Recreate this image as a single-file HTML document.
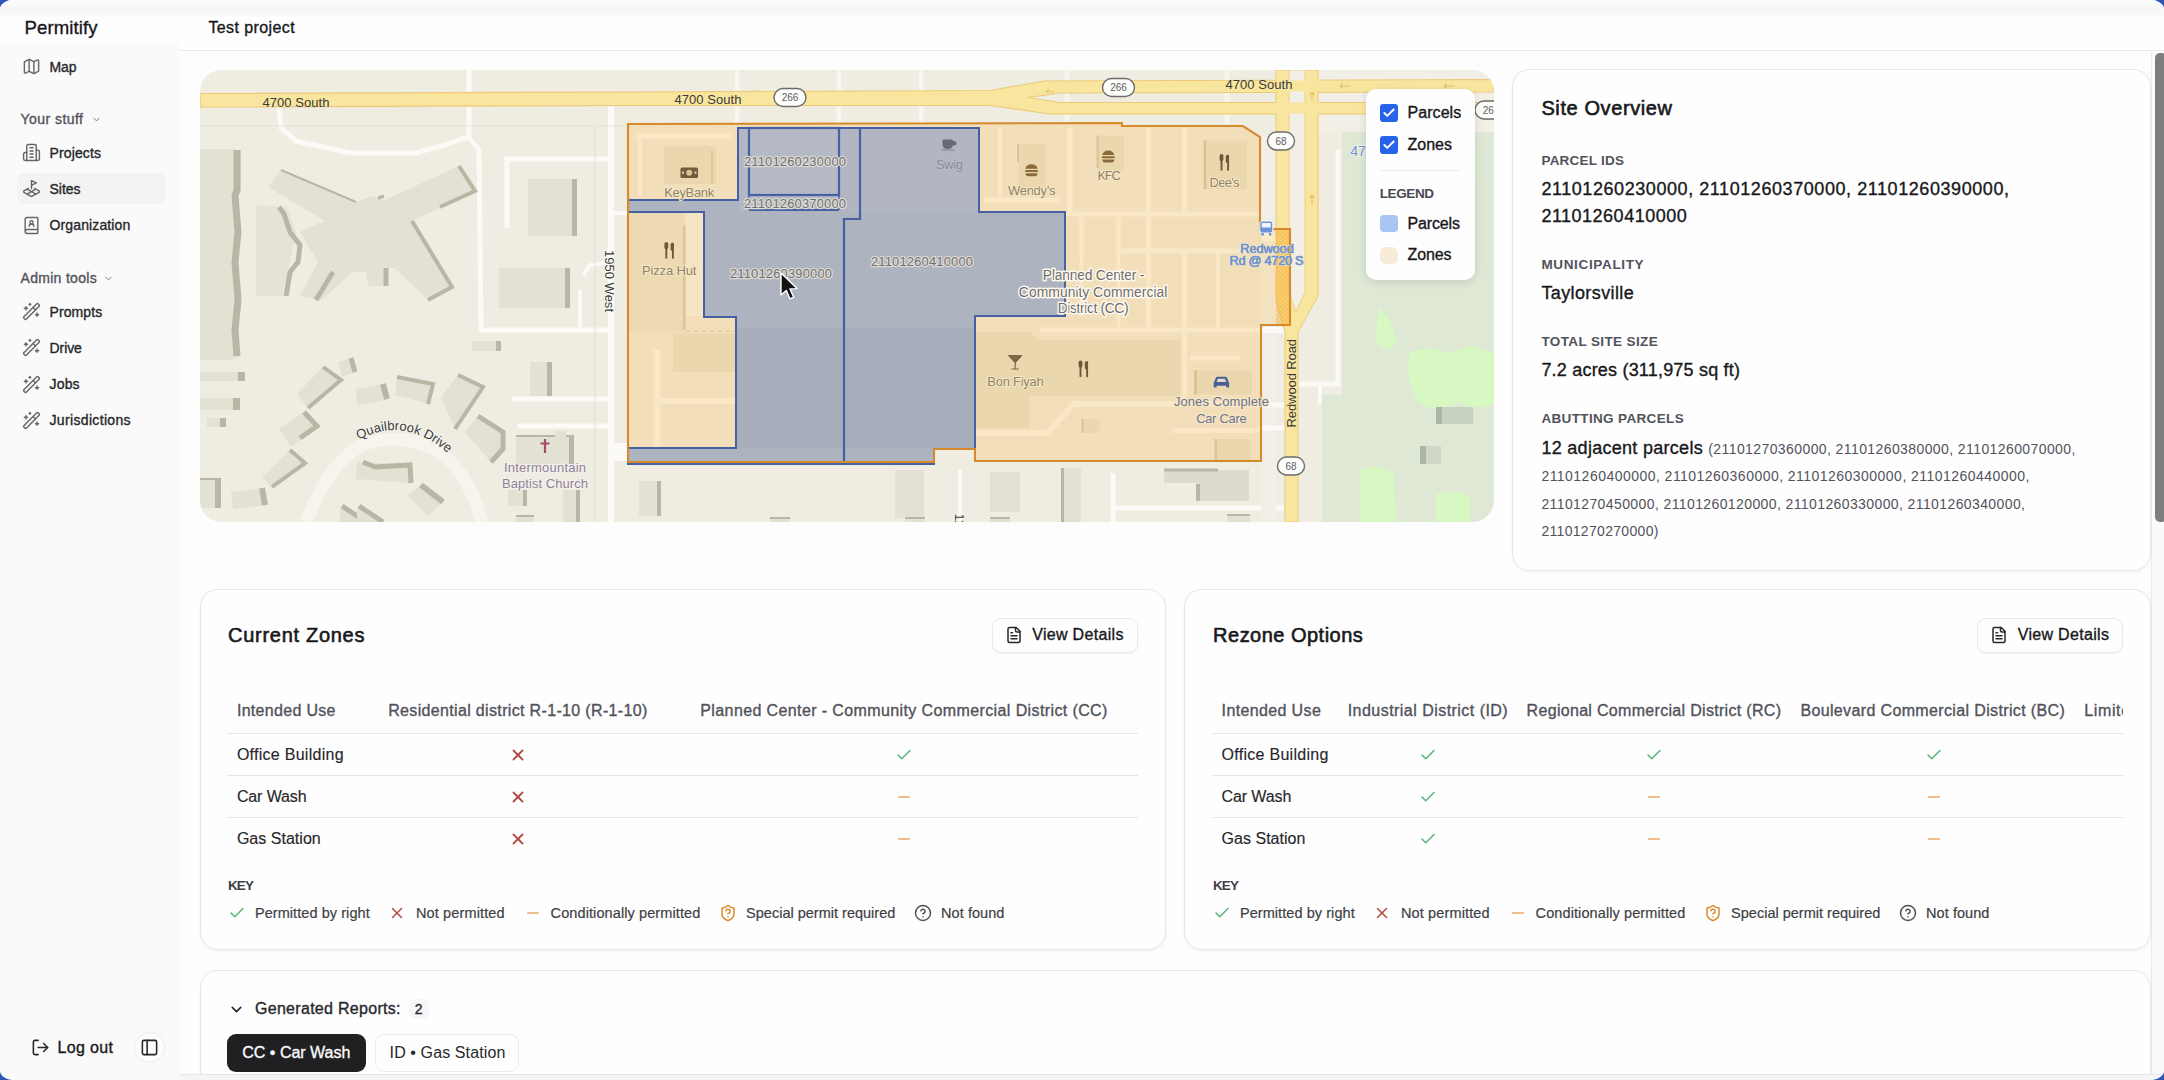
<!DOCTYPE html>
<html lang="en">
<head>
<meta charset="utf-8">
<title>Permitify - Test project</title>
<style>
*{box-sizing:border-box;margin:0;padding:0}
html,body{width:2164px;height:1080px;overflow:hidden;background:#2f55b5}
body{font-family:"Liberation Sans",sans-serif;color:#18181b;position:relative}
#win{position:absolute;left:0;top:0;width:2164px;height:1080px;background:#fdfdfd;border-radius:13px / 10px;overflow:hidden}
.abs{position:absolute}
.t{position:absolute;white-space:nowrap;line-height:1;transform:translateY(-50%)}
.m{-webkit-text-stroke:0.35px currentColor}
.sb{-webkit-text-stroke:0.6px currentColor}
#side{position:absolute;left:0;top:0;width:180px;height:1080px;background:#fafafa}
#sidehead{position:absolute;left:0;top:0;width:180px;height:44px;background:#fdfdfd}
#topstrip{position:absolute;left:0;top:0;width:2164px;height:17px;background:linear-gradient(#fbfbfb 0,#f9f9f9 5px,#f7f7f7 8px,#f8f8f8 14px,#fdfdfd 17px)}
#header{position:absolute;left:180px;top:0;width:1984px;height:51px;background:#fefefe;border-bottom:1.5px solid #e9e9e9}
.nav{font-size:14px;color:#27272a}
.grp{font-size:14px;color:#52525b}
.ico{position:absolute}
.card{position:absolute;background:#fefefe;border:1.5px solid #e7e7e9;border-radius:18px;box-shadow:0 1px 3px rgba(0,0,0,.05)}
.lbl{font-size:13.5px;letter-spacing:.7px;color:#52525b;font-weight:bold}
.val{font-size:18px;color:#18181b}
.sm{font-size:14px;color:#52525b}
.th{font-size:16px;color:#52525b}
.td{font-size:16px;color:#27272a}
.hr{position:absolute;height:1.5px;background:#e6e6e8}
.key{font-size:14.5px;color:#3f3f46}
</style>
</head>
<body>
<div id="win">
<!--SIDEBAR-->
<div id="side"><div id="sidehead"></div>
<div class="t m" style="left:24.5px;top:28px;letter-spacing:0.082px;font-size:18.600px;color:#18181b">Permitify</div>
<svg class="ico" style="left:21.5px;top:57.0px" width="19" height="19" viewBox="0 0 24 24" fill="none" stroke="#66666d" stroke-width="1.8" stroke-linecap="round" stroke-linejoin="round"><path d="M14.106 5.553a2 2 0 0 0 1.788 0l3.659-1.83A1 1 0 0 1 21 4.619v12.764a1 1 0 0 1-.553.894l-4.553 2.277a2 2 0 0 1-1.788 0l-4.212-2.106a2 2 0 0 0-1.788 0l-3.659 1.83A1 1 0 0 1 3 19.381V6.618a1 1 0 0 1 .553-.894l4.553-2.277a2 2 0 0 1 1.788 0z"/><path d="M15 5.764v15"/><path d="M9 3.236v15"/></svg>
<div class="t nav m" style="left:49.5px;top:66.5px;letter-spacing:-0.118px;">Map</div>
<div class="t grp m" style="left:20.5px;top:118.5px;letter-spacing:0.458px;">Your stuff</div>
<svg class="ico" style="left:90.5px;top:114.0px" width="11" height="11" viewBox="0 0 24 24" fill="none" stroke="#71717a" stroke-width="2" stroke-linecap="round" stroke-linejoin="round"><path d="m6 9 6 6 6-6"/></svg>
<div class="abs" style="left:17px;top:173px;width:149px;height:31px;border-radius:6px;background:#f3f3f4"></div>
<svg class="ico" style="left:21.5px;top:143.0px" width="19" height="19" viewBox="0 0 24 24" fill="none" stroke="#66666d" stroke-width="1.8" stroke-linecap="round" stroke-linejoin="round"><path d="M6 22V4a2 2 0 0 1 2-2h8a2 2 0 0 1 2 2v18Z"/><path d="M6 12H4a2 2 0 0 0-2 2v6a2 2 0 0 0 2 2h2"/><path d="M18 9h2a2 2 0 0 1 2 2v9a2 2 0 0 1-2 2h-2"/><path d="M10 6h4"/><path d="M10 10h4"/><path d="M10 14h4"/><path d="M10 18h4"/></svg>
<div class="t nav m" style="left:49.5px;top:152.5px;letter-spacing:0.132px;">Projects</div>
<svg class="ico" style="left:21.5px;top:179.0px" width="19" height="19" viewBox="0 0 24 24" fill="none" stroke="#66666d" stroke-width="1.8" stroke-linecap="round" stroke-linejoin="round"><path d="m12 8 6-3-6-3v10"/><path d="m8 11.990-5.500 3.140a1 1 0 0 0 0 1.740l8.500 4.860a2 2 0 0 0 2 0l8.500-4.860a1 1 0 0 0 0-1.740L16 12"/><path d="m6.490 12.850 11.020 6.300"/><path d="M17.510 12.850 6.500 19.150"/></svg>
<div class="t nav m" style="left:49.5px;top:188.5px;letter-spacing:-0.031px;">Sites</div>
<svg class="ico" style="left:21.5px;top:215.5px" width="19" height="19" viewBox="0 0 24 24" fill="none" stroke="#66666d" stroke-width="1.8" stroke-linecap="round" stroke-linejoin="round"><path d="M15 13a3 3 0 1 0-6 0"/><path d="M4 19.500v-15A2.500 2.500 0 0 1 6.500 2H19a1 1 0 0 1 1 1v18a1 1 0 0 1-1 1H6.500a1 1 0 0 1 0-5H20"/><circle cx="12" cy="8" r="2"/></svg>
<div class="t nav m" style="left:49.5px;top:225px;letter-spacing:0.129px;">Organization</div>
<div class="t grp m" style="left:20.5px;top:277.5px;letter-spacing:0.305px;">Admin tools</div>
<svg class="ico" style="left:103.0px;top:272.5px" width="11" height="11" viewBox="0 0 24 24" fill="none" stroke="#71717a" stroke-width="2" stroke-linecap="round" stroke-linejoin="round"><path d="m6 9 6 6 6-6"/></svg>
<svg class="ico" style="left:21.5px;top:302.0px" width="19" height="19" viewBox="0 0 24 24" fill="none" stroke="#66666d" stroke-width="1.8" stroke-linecap="round" stroke-linejoin="round"><path d="m21.640 3.640-1.280-1.280a1.210 1.210 0 0 0-1.720 0L2.360 18.640a1.210 1.210 0 0 0 0 1.720l1.280 1.280a1.200 1.200 0 0 0 1.720 0L21.640 5.360a1.200 1.200 0 0 0 0-1.720"/><path d="m14 7 3 3"/><path d="M5 6v4"/><path d="M19 14v4"/><path d="M10 2v2"/><path d="M7 8H3"/><path d="M21 16h-4"/><path d="M11 3H9"/></svg>
<div class="t nav m" style="left:49.5px;top:311.5px;letter-spacing:0.096px;">Prompts</div>
<svg class="ico" style="left:21.5px;top:338.3px" width="19" height="19" viewBox="0 0 24 24" fill="none" stroke="#66666d" stroke-width="1.8" stroke-linecap="round" stroke-linejoin="round"><path d="m21.640 3.640-1.280-1.280a1.210 1.210 0 0 0-1.720 0L2.360 18.640a1.210 1.210 0 0 0 0 1.720l1.280 1.280a1.200 1.200 0 0 0 1.720 0L21.640 5.360a1.200 1.200 0 0 0 0-1.720"/><path d="m14 7 3 3"/><path d="M5 6v4"/><path d="M19 14v4"/><path d="M10 2v2"/><path d="M7 8H3"/><path d="M21 16h-4"/><path d="M11 3H9"/></svg>
<div class="t nav m" style="left:49.5px;top:347.8px;letter-spacing:-0.068px;">Drive</div>
<svg class="ico" style="left:21.5px;top:374.8px" width="19" height="19" viewBox="0 0 24 24" fill="none" stroke="#66666d" stroke-width="1.8" stroke-linecap="round" stroke-linejoin="round"><path d="m21.640 3.640-1.280-1.280a1.210 1.210 0 0 0-1.720 0L2.360 18.640a1.210 1.210 0 0 0 0 1.720l1.280 1.280a1.200 1.200 0 0 0 1.720 0L21.640 5.360a1.200 1.200 0 0 0 0-1.720"/><path d="m14 7 3 3"/><path d="M5 6v4"/><path d="M19 14v4"/><path d="M10 2v2"/><path d="M7 8H3"/><path d="M21 16h-4"/><path d="M11 3H9"/></svg>
<div class="t nav m" style="left:49.5px;top:384.3px;letter-spacing:0.176px;">Jobs</div>
<svg class="ico" style="left:21.5px;top:410.9px" width="19" height="19" viewBox="0 0 24 24" fill="none" stroke="#66666d" stroke-width="1.8" stroke-linecap="round" stroke-linejoin="round"><path d="m21.640 3.640-1.280-1.280a1.210 1.210 0 0 0-1.720 0L2.360 18.640a1.210 1.210 0 0 0 0 1.720l1.280 1.280a1.200 1.200 0 0 0 1.720 0L21.640 5.360a1.200 1.200 0 0 0 0-1.720"/><path d="m14 7 3 3"/><path d="M5 6v4"/><path d="M19 14v4"/><path d="M10 2v2"/><path d="M7 8H3"/><path d="M21 16h-4"/><path d="M11 3H9"/></svg>
<div class="t nav m" style="left:49.5px;top:420.4px;letter-spacing:0.339px;">Jurisdictions</div>
<svg class="ico" style="left:30.5px;top:1037.8px" width="19" height="19" viewBox="0 0 24 24" fill="none" stroke="#27272a" stroke-width="2" stroke-linecap="round" stroke-linejoin="round"><path d="M9 21H5a2 2 0 0 1-2-2V5a2 2 0 0 1 2-2h4"/><polyline points="16 17 21 12 16 7"/><line x1="21" x2="9" y1="12" y2="12"/></svg>
<div class="t m" style="left:57.5px;top:1047.5px;letter-spacing:0.353px;font-size:16px;color:#18181b">Log out</div>
<div class="abs" style="left:133.500px;top:1031.500px;width:31px;height:31px;border-radius:15.500px;border:1.500px solid #ececee;background:#fdfdfd"></div>
<svg class="ico" style="left:139.7px;top:1037.7px" width="19" height="19" viewBox="0 0 24 24" fill="none" stroke="#27272a" stroke-width="2" stroke-linecap="round" stroke-linejoin="round"><rect width="18" height="18" x="3" y="3" rx="2"/><path d="M9 3v18"/></svg>
</div>
<!--HEADER-->
<div id="header"></div><div id="topstrip"></div><div class="t m" style="left:208.4px;top:28.2px;letter-spacing:0.399px;font-size:16px;color:#18181b">Test project</div>
<!--MAP-->
<div class="abs" style="left:200px;top:70px;width:1294px;height:452px;border-radius:22px;overflow:hidden;background:#efece1">
<svg class="abs" style="left:0;top:0" width="1294" height="452" viewBox="200 70 1294 452" font-family="Liberation Sans, sans-serif">
<rect x="200" y="70" width="1294" height="452" fill="#efece1" />
<polygon points="1342,132 1494,132 1494,522 1322,522 1322,395 1342,395" fill="#dfe8d5" />
<rect x="1298" y="70" width="196" height="62" fill="#f1efe6" />
<g fill="#d7f7c3">
<path d="M1378,308 q10,6 18,28 q4,10 -8,12 q-14,0 -12,-14z"/>
<path d="M1410,352 q20,-8 40,2 q20,-14 40,-2 l4,0 l0,52 q-20,8 -36,-2 q-20,14 -40,0 q-14,-24 -8,-50z"/>
<path d="M1360,470 q18,-8 34,4 l2,48 l-36,0z"/>
<path d="M1436,494 q18,-6 34,2 l0,26 l-34,0z"/>
<path d="M1420,150 q30,-6 60,0 l0,30 q-30,6 -60,0z" opacity=".35"/>
</g>
<rect x="1436" y="407" width="37" height="17" fill="#c8d2c0" /><rect x="1436" y="407" width="6" height="17" fill="#a9b5a5" />
<rect x="1420" y="446" width="21" height="18" fill="#cfd8c7" /><rect x="1420" y="446" width="6" height="18" fill="#a9b5a5" />
<polyline points="469,70 469,138 479,150 481,330 611,330" fill="none" stroke="#fbfaf6" stroke-width="5" stroke-linejoin="round"/>
<polyline points="279,106 281,128 296,141 350,153 415,153 445,145 470,136" fill="none" stroke="#fbfaf6" stroke-width="5" stroke-linejoin="round"/>
<polyline points="507,228 507,159 611,159" fill="none" stroke="#fbfaf6" stroke-width="5" />
<polyline points="611,106 611,522" fill="none" stroke="#fbfaf6" stroke-width="6" />
<polyline points="580,290 580,330" fill="none" stroke="#fbfaf6" stroke-width="4" />
<polyline points="583,275 590,265 611,262" fill="none" stroke="#fbfaf6" stroke-width="4" />
<polyline points="512,399 611,399" fill="none" stroke="#fbfaf6" stroke-width="5" />
<polyline points="517,426 611,426" fill="none" stroke="#fbfaf6" stroke-width="5" />
<polyline points="611,213 628,213" fill="none" stroke="#fbfaf6" stroke-width="4" />
<polyline points="611,452 628,452" fill="none" stroke="#fbfaf6" stroke-width="18" />
<path d="M306,522 Q330,462 360,446 Q400,430 440,452 Q470,476 482,522" fill="none" stroke="#f6f4ec" stroke-width="13"/>
<polyline points="1113,473 1113,522" fill="none" stroke="#fbfaf6" stroke-width="5" />
<polyline points="1113,508 1284,508" fill="none" stroke="#fbfaf6" stroke-width="5" />
<polyline points="960,470 960,522" fill="none" stroke="#fbfaf6" stroke-width="4" />
<rect x="1261" y="136" width="15" height="386" fill="#f1efe8" />
<polyline points="1262,237 1276,237" fill="none" stroke="#fbfaf6" stroke-width="8" />
<polyline points="1262,330 1284,330" fill="none" stroke="#fbfaf6" stroke-width="6" />
<polyline points="1262,405 1284,405" fill="none" stroke="#fbfaf6" stroke-width="5" />
<polyline points="1262,428 1284,428" fill="none" stroke="#fbfaf6" stroke-width="5" />
<polyline points="1298,384 1338,384 1338,150" fill="none" stroke="#fbfaf6" stroke-width="5" />
<polyline points="1320,384 1320,404" fill="none" stroke="#fbfaf6" stroke-width="4" />
<polyline points="737,70 737,124" fill="none" stroke="#f7f5ee" stroke-width="5" />
<polyline points="839,70 839,124" fill="none" stroke="#f7f5ee" stroke-width="5" />
<polyline points="921,70 921,124" fill="none" stroke="#f7f5ee" stroke-width="5" />
<polyline points="1067,70 1067,124" fill="none" stroke="#f7f5ee" stroke-width="5" />
<polyline points="1227,70 1227,124" fill="none" stroke="#f7f5ee" stroke-width="5" />
<polyline points="595,126 595,522" fill="none" stroke="#e2dfd3" stroke-width="1" />
<polyline points="200,126 628,126" fill="none" stroke="#e6e3d8" stroke-width="1" />
<polygon points="200,149 233,149 241,152 241,190 237,196 241,232 237,262 241,300 237,330 240,356 230,360 200,360" fill="#e3e1d3" />
<polyline points="237,150 237,190 235,196 238,232 235,262 238,300 235,330 237,356" fill="none" stroke="#b9b6a6" stroke-width="7" />
<polygon points="256,205 287,207 296,232 290,262 282,296 256,296" fill="#e5e3d6" />
<polyline points="279,207 284,214 290,232 300,245 298,262 290,272 286,296" fill="none" stroke="#b9b6a6" stroke-width="5" />
<polygon points="281,170 356,202 372,196 385,200 459,166 475,191 412,221 452,287 428,300 395,268 388,268 388,286 368,286 366,272 352,272 322,300 300,296 318,262 300,232 325,221 268,187" fill="#e3e1d3" />
<polyline points="281,170 356,202" fill="none" stroke="#b9b6a6" stroke-width="2" />
<polyline points="459,166 475,191 440,207" fill="none" stroke="#b9b6a6" stroke-width="4" stroke-linejoin="miter"/>
<polyline points="412,221 452,287 428,300" fill="none" stroke="#b9b6a6" stroke-width="4" />
<polyline points="386,268 386,286" fill="none" stroke="#b9b6a6" stroke-width="5" />
<polyline points="333,272 316,300" fill="none" stroke="#b9b6a6" stroke-width="5" />
<polyline points="378,198 384,196" fill="none" stroke="#b9b6a6" stroke-width="3" />
<rect x="528" y="179" width="49" height="57" fill="#e3e1d3" /><rect x="572" y="179" width="5" height="57" fill="#b9b6a6" />
<rect x="499" y="268" width="71" height="40" fill="#e3e1d3" /><rect x="565" y="268" width="5" height="40" fill="#b9b6a6" />
<rect x="200" y="372" width="45" height="9" fill="#e3e1d3" /><rect x="238" y="372" width="7" height="9" fill="#b9b6a6" />
<rect x="200" y="398" width="40" height="12" fill="#e3e1d3" /><rect x="233" y="398" width="7" height="12" fill="#b9b6a6" />
<rect x="207" y="418" width="19" height="9" fill="#e3e1d3" /><rect x="220" y="418" width="6" height="9" fill="#b9b6a6" />
<rect x="200" y="478" width="21" height="30" fill="#e3e1d3" /><rect x="215" y="478" width="6" height="30" fill="#b9b6a6" /><rect x="200" y="478" width="21" height="2" fill="#b9b6a6" />
<polygon points="231,492 264,488 267,505 233,509" fill="#e3e1d3" /><polyline points="262,488 265,505" fill="none" stroke="#b9b6a6" stroke-width="6" />
<polygon points="297,394 323,367 341,380 308,408" fill="#e3e1d3" /><polyline points="323,367 341,380 308,408" fill="none" stroke="#b9b6a6" stroke-width="4" />
<polygon points="338,362 352,358 356,372 342,377" fill="#e3e1d3" /><polyline points="351,358 355,372" fill="none" stroke="#b9b6a6" stroke-width="5" />
<polygon points="279,429 304,412 317,426 291,447" fill="#e3e1d3" /><polyline points="304,412 317,426 300,438" fill="none" stroke="#b9b6a6" stroke-width="5" />
<polygon points="262,477 290,450 305,463 272,487" fill="#e3e1d3" /><polyline points="290,450 305,463 272,487" fill="none" stroke="#b9b6a6" stroke-width="4" />
<polygon points="356,389 384,384 389,399 357,405" fill="#e3e1d3" /><polyline points="383,384 387,399" fill="none" stroke="#b9b6a6" stroke-width="6" />
<polygon points="397,377 433,384 429,404 395,395" fill="#e3e1d3" /><polyline points="397,377 433,384 428,404" fill="none" stroke="#b9b6a6" stroke-width="4" />
<polygon points="458,375 483,387 455,429 441,397" fill="#e3e1d3" /><polyline points="458,375 483,387 455,429" fill="none" stroke="#b9b6a6" stroke-width="4" />
<polygon points="478,416 503,432 503,449 491,462 465,432" fill="#e3e1d3" /><polyline points="478,416 503,432 503,449 491,462" fill="none" stroke="#b9b6a6" stroke-width="5" />
<polygon points="357,462 410,464 412,483 356,479" fill="#e3e1d3" /><polyline points="363,462 375,467 410,465 411,483" fill="none" stroke="#b9b6a6" stroke-width="5" />
<polygon points="407,495 421,485 443,502 428,516" fill="#e3e1d3" /><polyline points="421,485 443,502" fill="none" stroke="#b9b6a6" stroke-width="6" />
<polygon points="340,506 365,522 340,522" fill="#e3e1d3" /><polyline points="342,506 366,522" fill="none" stroke="#b9b6a6" stroke-width="5" />
<polygon points="357,506 380,522 357,522" fill="#e3e1d3" /><polyline points="359,506 383,522" fill="none" stroke="#b9b6a6" stroke-width="5" />
<rect x="472" y="341" width="29" height="10" fill="#e3e1d3" /><rect x="496" y="341" width="5" height="10" fill="#b9b6a6" />
<rect x="530" y="362" width="22" height="34" fill="#e3e1d3" /><rect x="547" y="362" width="5" height="34" fill="#b9b6a6" />
<rect x="516" y="435" width="58" height="29" fill="#e3e1d3" /><rect x="516" y="435" width="58" height="2" fill="#b9b6a6" /><rect x="555" y="431" width="11" height="6" fill="#e3e1d3" /><rect x="569" y="437" width="5" height="27" fill="#b9b6a6" />
<rect x="563" y="490" width="17" height="32" fill="#e3e1d3" /><rect x="576" y="490" width="4" height="32" fill="#b9b6a6" />
<rect x="508" y="490" width="19" height="16" fill="#e3e1d3" /><rect x="523" y="490" width="4" height="16" fill="#b9b6a6" />
<rect x="516" y="515" width="18" height="7" fill="#e3e1d3" /><rect x="516" y="515" width="18" height="2" fill="#b9b6a6" />
<rect x="639" y="481" width="22" height="35" fill="#e3e1d3" /><rect x="657" y="481" width="4" height="35" fill="#b9b6a6" />
<rect x="895" y="470" width="29" height="48" fill="#e3e1d3" />
<rect x="990" y="472" width="30" height="40" fill="#e3e1d3" />
<rect x="1061" y="468" width="20" height="54" fill="#e3e1d3" /><rect x="1061" y="468" width="3" height="54" fill="#b9b6a6" />
<polygon points="1164,470 1249,470 1249,501 1198,501 1198,483 1164,483" fill="#dddbd0" />
<polyline points="1164,470 1218,470" fill="none" stroke="#b9b6a6" stroke-width="3" /><polyline points="1198,484 1198,501" fill="none" stroke="#b9b6a6" stroke-width="4" />
<rect x="1227" y="514" width="23" height="8" fill="#e3e1d3" /><rect x="1227" y="514" width="23" height="2" fill="#b9b6a6" />
<rect x="770" y="517" width="20" height="5" fill="#e3e1d3" /><rect x="770" y="517" width="20" height="2" fill="#b9b6a6" />
<rect x="905" y="517" width="20" height="5" fill="#e3e1d3" /><rect x="905" y="517" width="20" height="2" fill="#b9b6a6" />
<rect x="990" y="517" width="20" height="5" fill="#e3e1d3" /><rect x="990" y="517" width="20" height="2" fill="#b9b6a6" />
<polygon points="200,93.5 640,92 990,90.5 1045,81 1494,79.5 1494,92 1060,93 1028,97.5 1060,102.5 1494,102.5 1494,114 1050,114 990,105.5 640,105.5 200,107" fill="#f9e69e" stroke="#edc979" stroke-width="1.2"/>
<polygon points="1276,70 1318,70 1318,296 1298,332 1298,522 1285,522 1285,332 1276,300" fill="#f9e69e" stroke="#edc979" stroke-width="1"/>
<polygon points="1289,70 1305,70 1305,292 1296,312 1289,292" fill="#f1efe6" stroke="#edc979" stroke-width=".8"/>
<rect x="1288" y="80.5" width="18" height="11.0" fill="#f9e69e" /><rect x="1288" y="102.5" width="18" height="11.0" fill="#f9e69e" />
<rect x="1275" y="80.5" width="2" height="11.0" fill="#f9e69e" /><rect x="1275" y="102.5" width="2" height="11.0" fill="#f9e69e" /><rect x="1317" y="80.5" width="2" height="11.0" fill="#f9e69e" /><rect x="1317" y="102.5" width="2" height="11.0" fill="#f9e69e" />
<polygon points="628,124 1122,123 1122,126 1243,126 1260,137 1260,229 1290,229 1290,325 1261,325 1261,461 975,461 975,449 934,449 934,462 628,462" fill="rgba(255,168,10,0.185)" />
<polygon points="976,332 1030,332 1040,340 1180,340 1180,396 1030,396 1030,428 976,428" fill="rgba(200,172,110,0.16)" />
<rect x="1194" y="370" width="58" height="24.5" fill="rgba(200,172,110,0.16)" /><rect x="1194" y="370" width="3" height="24.5" fill="rgba(170,140,80,0.25)" />
<rect x="1081.5" y="419" width="18.0" height="14" fill="rgba(200,172,110,0.16)" /><rect x="1081.5" y="419" width="2.0" height="14" fill="rgba(170,140,80,0.25)" />
<rect x="1214.5" y="439" width="35.5" height="22" fill="rgba(200,172,110,0.16)" /><rect x="1214.5" y="439" width="2.5" height="22" fill="rgba(170,140,80,0.25)" />
<rect x="1018" y="144" width="28" height="44" fill="rgba(200,172,110,0.16)" /><rect x="1017" y="144" width="2" height="18" fill="rgba(170,140,80,0.3)" />
<rect x="1097.5" y="135.5" width="26.5" height="34.5" fill="rgba(200,172,110,0.16)" /><rect x="1096.5" y="135.5" width="2.0" height="32.5" fill="rgba(170,140,80,0.3)" />
<rect x="1204.5" y="140.5" width="42.5" height="48.5" fill="rgba(200,172,110,0.16)" /><rect x="1203.5" y="140.5" width="2.5" height="48.5" fill="rgba(170,140,80,0.3)" />
<rect x="664" y="146" width="52" height="38" fill="rgba(200,172,110,0.16)" /><rect x="711" y="150" width="2" height="34" fill="rgba(170,140,80,0.2)" />
<rect x="629" y="213" width="55" height="119" fill="rgba(200,172,110,0.09)" /><rect x="683" y="226" width="2.5" height="104" fill="rgba(170,140,80,0.30)" /><rect x="686" y="213" width="17" height="103" fill="rgba(255,244,215,0.30)" />
<polyline points="685,331 735,331" fill="none" stroke="rgba(170,140,80,0.35)" stroke-width="1.2" stroke-dasharray="5 3"/>
<rect x="673" y="333" width="62" height="39" fill="rgba(200,172,110,0.16)" />
<polyline points="1066,214 1260,214" fill="none" stroke="#f9e7c5" stroke-width="5" />
<polyline points="1070,128 1070,214" fill="none" stroke="#f9e7c5" stroke-width="5" />
<polyline points="1148.5,128 1148.5,332" fill="none" stroke="#f9e7c5" stroke-width="5" />
<polyline points="1184.5,128 1184.5,214" fill="none" stroke="#f9e7c5" stroke-width="5" />
<polyline points="1120,251 1260,251" fill="none" stroke="#f9e7c5" stroke-width="5" />
<polyline points="1081.5,214 1081.5,316" fill="none" stroke="#f9e7c5" stroke-width="4" />
<polyline points="1118.5,214 1118.5,330" fill="none" stroke="#f9e7c5" stroke-width="4" />
<polyline points="1040,330 1260,330" fill="none" stroke="#f9e7c5" stroke-width="5" />
<polyline points="1218,251 1218,330" fill="none" stroke="#f9e7c5" stroke-width="4" />
<polyline points="1184.5,251 1184.5,404" fill="none" stroke="#f9e7c5" stroke-width="5" />
<polyline points="1000,128 1000,200" fill="none" stroke="#f9e7c5" stroke-width="4" />
<polyline points="984,200 1060,200" fill="none" stroke="#f9e7c5" stroke-width="5" />
<polyline points="1190,358 1240,358" fill="none" stroke="#f9e7c5" stroke-width="5" />
<polyline points="1260,404 1074,404 1047,433 976,433" fill="none" stroke="#f9e7c5" stroke-width="6" stroke-linejoin="round"/>
<polyline points="1171.5,430.5 1260,430.5" fill="none" stroke="#f9e7c5" stroke-width="5" />
<polyline points="636,136 730,136" fill="none" stroke="#f9e7c5" stroke-width="5" />
<polyline points="640,136 640,196" fill="none" stroke="#f9e7c5" stroke-width="4" />
<polyline points="657,350 657,447" fill="none" stroke="#f9e7c5" stroke-width="7" />
<polyline points="657,401 735,401" fill="none" stroke="#f9e7c5" stroke-width="6" />
<defs><pattern id="hat" width="3" height="3" patternUnits="userSpaceOnUse" patternTransform="rotate(45)"><rect width="1.500" height="3" fill="rgba(240,150,30,0.35)"/></pattern></defs>
<rect x="1276" y="229" width="14" height="96" fill="rgba(245,165,40,0.12)" /><rect x="1276" y="229" width="14" height="96" fill="url(#hat)" />
<polygon points="738,128 979,128 979,212 1065,212 1065,316 975,316 975,449 934,449 934,464 628,464 628,448 736,448 736,317 704,317 704,212 628,212 628,200 738,200" fill="#abb2c0" opacity="0.97"/>
<rect x="749" y="128" width="90" height="67" fill="rgba(255,255,255,0.05)" />
<rect x="737" y="328" width="238" height="120" fill="rgba(40,40,60,0.035)" />
<rect x="738" y="129" width="241" height="82" fill="rgba(255,255,240,0.05)" />
<polygon points="738,128 979,128 979,212 1065,212 1065,316 975,316 975,449 934,449 934,464 628,464 628,448 736,448 736,317 704,317 704,212 628,212 628,200 738,200" fill="none" stroke="#4560a3" stroke-width="2" stroke-linejoin="miter"/>
<polyline points="844,464 844,219 860,219 860,128" fill="none" stroke="#4560a3" stroke-width="2.2" />
<rect x="749" y="128" width="90" height="67" fill="none" stroke="#4560a3" stroke-width="2.2"/>
<polyline points="749,210 839,210" fill="none" stroke="#4560a3" stroke-width="2.2" />
<polyline points="839,195 839,210" fill="none" stroke="#4560a3" stroke-width="1.2" />
<polyline points="749,195 749,210" fill="none" stroke="#4560a3" stroke-width="1.2" />
<polygon points="628,124 1122,123 1122,126 1243,126 1260,137 1260,229 1290,229 1290,325 1261,325 1261,461 975,461 975,449 934,449 934,462 628,462" fill="none" stroke="#d78a2c" stroke-width="2.1" stroke-linejoin="miter"/>
<text x="296" y="106.5" font-size="13" fill="#3a3a3a" text-anchor="middle" stroke="#f9e69e" stroke-width="0" stroke-linejoin="round" paint-order="stroke" textLength="67" lengthAdjust="spacing" >4700 South</text>
<text x="708" y="104" font-size="13" fill="#3a3a3a" text-anchor="middle" stroke="#f9e69e" stroke-width="0" stroke-linejoin="round" paint-order="stroke" textLength="67" lengthAdjust="spacing" >4700 South</text>
<text x="1259" y="88.5" font-size="13" fill="#3a3a3a" text-anchor="middle" stroke="#f9e69e" stroke-width="0" stroke-linejoin="round" paint-order="stroke" textLength="67" lengthAdjust="spacing" >4700 South</text>
<rect x="774.0" y="88.5" width="32" height="18" rx="9.0" fill="#fdfdfb" stroke="#6b6b6b" stroke-width="1.4"/><text x="790" y="101.3" font-size="10" fill="#5e5e5e" text-anchor="middle">266</text>
<rect x="1102.5" y="78.5" width="32" height="18" rx="9.0" fill="#fdfdfb" stroke="#6b6b6b" stroke-width="1.4"/><text x="1118.5" y="91.3" font-size="10" fill="#5e5e5e" text-anchor="middle">266</text>
<rect x="1475.0" y="101.0" width="32" height="18" rx="9.0" fill="#fdfdfb" stroke="#6b6b6b" stroke-width="1.4"/><text x="1491" y="113.8" font-size="10" fill="#5e5e5e" text-anchor="middle">266</text>
<rect x="1267.5" y="132.0" width="27" height="18" rx="9.0" fill="#fdfdfb" stroke="#6b6b6b" stroke-width="1.4"/><text x="1281" y="144.8" font-size="10" fill="#5e5e5e" text-anchor="middle">68</text>
<rect x="1277.5" y="457.0" width="27" height="18" rx="9.0" fill="#fdfdfb" stroke="#6b6b6b" stroke-width="1.4"/><text x="1291" y="469.8" font-size="10" fill="#5e5e5e" text-anchor="middle">68</text>
<text x="795" y="166" font-size="13" fill="#707070" text-anchor="middle" stroke="#dcdad4" stroke-width="2.5" stroke-linejoin="round" paint-order="stroke" textLength="102" lengthAdjust="spacing" >21101260230000</text>
<text x="795" y="207.5" font-size="13" fill="#707070" text-anchor="middle" stroke="#dcdad4" stroke-width="2.5" stroke-linejoin="round" paint-order="stroke" textLength="102" lengthAdjust="spacing" >21101260370000</text>
<text x="781" y="277.5" font-size="13" fill="#707070" text-anchor="middle" stroke="#dcdad4" stroke-width="2.5" stroke-linejoin="round" paint-order="stroke" textLength="102" lengthAdjust="spacing" >21101260390000</text>
<text x="922" y="265.5" font-size="13" fill="#707070" text-anchor="middle" stroke="#dcdad4" stroke-width="2.5" stroke-linejoin="round" paint-order="stroke" textLength="102" lengthAdjust="spacing" >21101260410000</text>
<text x="689.2" y="197" font-size="13" fill="#8e8468" text-anchor="middle" stroke="#f6e6c6" stroke-width="2" stroke-linejoin="round" paint-order="stroke" textLength="50" lengthAdjust="spacing" >KeyBank</text>
<rect x="680.500" y="167.500" width="17.500" height="10.500" rx="1.500" fill="#6e5d3c"/><circle cx="689.200" cy="172.800" r="3" fill="#d9c396"/><rect x="682" y="171.500" width="2" height="2.500" fill="#d9c396"/><rect x="694.500" y="171.500" width="2" height="2.500" fill="#d9c396"/>
<text x="669.2" y="274.8" font-size="13" fill="#8e8468" text-anchor="middle" stroke="#f6e6c6" stroke-width="2" stroke-linejoin="round" paint-order="stroke" textLength="54.5" lengthAdjust="spacing" >Pizza Hut</text>
<g stroke="#6b5a3a" fill="none" stroke-linecap="round"><path d="M666.3000000000001,243.8v3.500" stroke-width="3.800"/><path d="M666.3000000000001,246.8v11" stroke-width="1.900"/><path d="M672.9,257.8v-14" stroke-width="1.900"/><path d="M672.2,244.3v5" stroke-width="3.200"/></g>
<text x="949.4" y="169" font-size="13" fill="#8a8e98" text-anchor="middle" stroke="#b6bbc6" stroke-width="2" stroke-linejoin="round" paint-order="stroke" textLength="27" lengthAdjust="spacing" >Swig</text>
<path d="M943,140h9.500v4.500a4,4 0 0 1 -4,4h-1.500a4,4 0 0 1 -4,-4zM952.500,141.500h1.800a1.600,1.600 0 0 1 0,3.500h-1.800" fill="#666b75" stroke="#666b75" stroke-width="1"/><path d="M941.500,150h13" stroke="#7d828c" stroke-width="1"/>
<text x="1031.7" y="194.6" font-size="13" fill="#8e8468" text-anchor="middle" stroke="#f6e6c6" stroke-width="2" stroke-linejoin="round" paint-order="stroke" textLength="47.5" lengthAdjust="spacing" >Wendy&#39;s</text>
<g fill="#8a6a3a"><path d="M1025.5,168.8a6,4.5 0 0 1 12,0z"/><rect x="1025.0" y="170.0" width="13" height="2" rx="1"/><path d="M1025.5,173.3h12a3,3 0 0 1 -3,3h-6a3,3 0 0 1 -3,-3z"/></g>
<text x="1109.2" y="180.4" font-size="13" fill="#8e8468" text-anchor="middle" stroke="#f6e6c6" stroke-width="2" stroke-linejoin="round" paint-order="stroke" textLength="23.5" lengthAdjust="spacing" >KFC</text>
<g fill="#8a6a3a"><path d="M1102.3,155.1a6,4.5 0 0 1 12,0z"/><rect x="1101.8" y="156.29999999999998" width="13" height="2" rx="1"/><path d="M1102.3,159.6h12a3,3 0 0 1 -3,3h-6a3,3 0 0 1 -3,-3z"/></g>
<text x="1224.6" y="186.8" font-size="13" fill="#8e8468" text-anchor="middle" stroke="#f6e6c6" stroke-width="2" stroke-linejoin="round" paint-order="stroke" textLength="30" lengthAdjust="spacing" >Dee&#39;s</text>
<g stroke="#6b5a3a" fill="none" stroke-linecap="round"><path d="M1221.5,155.8v3.500" stroke-width="3.800"/><path d="M1221.5,158.8v11" stroke-width="1.900"/><path d="M1228.1,169.8v-14" stroke-width="1.900"/><path d="M1227.3999999999999,156.3v5" stroke-width="3.200"/></g>
<text x="1093.6" y="280" font-size="14" fill="#6e6e6e" text-anchor="middle" stroke="#fdf8ee" stroke-width="3" stroke-linejoin="round" paint-order="stroke" textLength="101.5" lengthAdjust="spacing" >Planned Center -</text>
<text x="1093.1" y="296.6" font-size="14" fill="#6e6e6e" text-anchor="middle" stroke="#fdf8ee" stroke-width="3" stroke-linejoin="round" paint-order="stroke" textLength="148.5" lengthAdjust="spacing" >Community Commercial</text>
<text x="1093.2" y="312.5" font-size="14" fill="#6e6e6e" text-anchor="middle" stroke="#fdf8ee" stroke-width="3" stroke-linejoin="round" paint-order="stroke" textLength="71" lengthAdjust="spacing" >District (CC)</text>
<text x="1267" y="253" font-size="12.8" fill="#6f93cc" text-anchor="middle" stroke="#f3e7cf" stroke-width="1.5" stroke-linejoin="round" paint-order="stroke" textLength="53.5" lengthAdjust="spacing" >Redwood</text><text x="1267" y="253" font-size="12.8" fill="#6f93cc" text-anchor="middle" stroke="#6f93cc" stroke-width="0.5" textLength="53.5" lengthAdjust="spacing" >Redwood</text>
<text x="1266.6" y="265.2" font-size="12.8" fill="#6f93cc" text-anchor="middle" stroke="#f3e7cf" stroke-width="1.5" stroke-linejoin="round" paint-order="stroke" textLength="74" lengthAdjust="spacing" >Rd @ 4720 S</text><text x="1266.6" y="265.2" font-size="12.8" fill="#6f93cc" text-anchor="middle" stroke="#6f93cc" stroke-width="0.5" textLength="74" lengthAdjust="spacing" >Rd @ 4720 S</text>
<g><rect x="1259.800" y="221" width="13" height="12" rx="2.500" fill="#6b93d6" stroke="#f5f5f5" stroke-width="1"/><rect x="1261.800" y="223" width="9" height="4.500" fill="#f0f4fb"/><rect x="1261.300" y="233" width="2.500" height="2.500" fill="#6b93d6"/><rect x="1268.800" y="233" width="2.500" height="2.500" fill="#6b93d6"/></g>
<text x="1015.5" y="386" font-size="13" fill="#8e8468" text-anchor="middle" stroke="#f6e6c6" stroke-width="2" stroke-linejoin="round" paint-order="stroke" textLength="56.5" lengthAdjust="spacing" >Bon Fiyah</text>
<path d="M1008.700,355.500h13l-6.500,7zM1015.200,362v6.500M1011.500,369h7.400" fill="#7a6846" stroke="#7a6846" stroke-width="1.200" stroke-linejoin="round"/>
<g stroke="#6b5a3a" fill="none" stroke-linecap="round"><path d="M1080.5,362.3v3.500" stroke-width="3.800"/><path d="M1080.5,365.3v11" stroke-width="1.900"/><path d="M1087.1,376.3v-14" stroke-width="1.900"/><path d="M1086.3999999999999,362.8v5" stroke-width="3.200"/></g>
<text x="1221.4" y="406.2" font-size="13" fill="#6e7288" text-anchor="middle" stroke="#f5e6c8" stroke-width="2" stroke-linejoin="round" paint-order="stroke" textLength="95" lengthAdjust="spacing" >Jones Complete</text>
<text x="1221.4" y="422.5" font-size="13" fill="#6e7288" text-anchor="middle" stroke="#f5e6c8" stroke-width="2" stroke-linejoin="round" paint-order="stroke" textLength="50.5" lengthAdjust="spacing" >Car Care</text>
<path d="M1213.700,387.500v-4.500l2,-5q.5,-1.200 1.700,-1.200h8q1.200,0 1.700,1.200l2,5v4.500h-2.800v-1.800h-9.800v1.800z" fill="#4a5f96"/><path d="M1216.600,382l1.200,-3.300h7.200l1.200,3.300z" fill="#e3d9c4"/>
<text x="0" y="0" font-size="13" fill="#3a3a3a" text-anchor="middle" stroke="#f9e69e" stroke-width="0" stroke-linejoin="round" paint-order="stroke" textLength="88.5" lengthAdjust="spacing" transform="translate(1295.800,383.200) rotate(-90)">Redwood Road</text>
<text x="0" y="0" font-size="13" fill="#3a3a3a" text-anchor="middle" stroke="#fbfaf6" stroke-width="2" stroke-linejoin="round" paint-order="stroke" textLength="62" lengthAdjust="spacing" transform="translate(604.500,281) rotate(90)">1950 West</text>
<path id="qb" d="M357,441 Q403,414 449,454" fill="none"/>
<text font-size="13" fill="#3a3a3a" stroke="#f4f2ea" stroke-width="2" paint-order="stroke"><textPath href="#qb" startOffset="2">Quailbrook Drive</textPath></text>
<text x="545" y="471.5" font-size="13" fill="#8f7f9a" text-anchor="middle" stroke="#f3f0ea" stroke-width="2.5" stroke-linejoin="round" paint-order="stroke" textLength="82" lengthAdjust="spacing" >Intermountain</text>
<text x="545" y="487.5" font-size="13" fill="#8f7f9a" text-anchor="middle" stroke="#f3f0ea" stroke-width="2.5" stroke-linejoin="round" paint-order="stroke" textLength="86" lengthAdjust="spacing" >Baptist Church</text>
<path d="M545,439v14M540.500,443.500h9" stroke="#a0506a" stroke-width="2.200" fill="none"/>
<text x="1358" y="156" font-size="14" fill="#6b93d6" text-anchor="middle" stroke="#f1efe6" stroke-width="2" stroke-linejoin="round" paint-order="stroke" >47</text>
<text x="0" y="0" font-size="12" fill="#3a3a3a" text-anchor="middle" stroke="#f4f2ea" stroke-width="2" stroke-linejoin="round" paint-order="stroke" transform="translate(955,520) rotate(90)">11</text>
<g stroke="#e3c46e" stroke-width="1.200" fill="none"><path d="M1340,86h10M1340,86l3,-2.500M1340,86l3,2.500"/><path d="M1444,86h10M1444,86l3,-2.500M1444,86l3,2.500"/><path d="M1312,205v-10M1312,195l-2.500,3M1312,195l2.500,3"/><path d="M1312,100v-8M1312,92l-2.500,3M1312,92l2.500,3"/><path d="M1046,92h8M1046,92l3,-2.500"/></g>
<path d="M781,273 l0,22 l5.200,-4.600 l3.700,8.400 l3.800,-1.700 l-3.700,-8.200 l7.100,-.3z" fill="#111" stroke="#fff" stroke-width="1.400" stroke-linejoin="round"/>
</svg></div>
<div class="abs" style="left:1366px;top:88.500px;width:108.500px;height:191px;border-radius:10px;background:#fefefe;box-shadow:0 2px 8px rgba(0,0,0,.12)"></div>
<div class="abs" style="left:1379.500px;top:104px;width:18px;height:18px;border-radius:3px;background:#2563eb"></div>
<svg class="ico" style="left:1381.500px;top:106px" width="14" height="14" viewBox="0 0 24 24" fill="none" stroke="#fff" stroke-width="3.400" stroke-linecap="round" stroke-linejoin="round"><path d="M20 6 9 17l-5-5"/></svg>
<div class="abs" style="left:1379.500px;top:136px;width:18px;height:18px;border-radius:3px;background:#2563eb"></div>
<svg class="ico" style="left:1381.500px;top:138px" width="14" height="14" viewBox="0 0 24 24" fill="none" stroke="#fff" stroke-width="3.400" stroke-linecap="round" stroke-linejoin="round"><path d="M20 6 9 17l-5-5"/></svg>
<div class="t m" style="left:1407.6px;top:113.3px;letter-spacing:0.041px;font-size:16px;color:#18181b">Parcels</div>
<div class="t m" style="left:1407.6px;top:145.3px;letter-spacing:-0.017px;font-size:16px;color:#18181b">Zones</div>
<div class="abs" style="left:1380px;top:169.500px;width:80px;height:1.500px;background:#ececee"></div>
<div class="t lbl" style="left:1379.7px;top:193.6px;letter-spacing:-0.391px;color:#4a4a52">LEGEND</div>
<div class="abs" style="left:1379.500px;top:215px;width:18px;height:17px;border-radius:4px;background:#a9c5f2"></div>
<div class="abs" style="left:1379.500px;top:246.500px;width:18px;height:17px;border-radius:6px;background:#f9ebd9"></div>
<div class="t m" style="left:1407.6px;top:223.5px;letter-spacing:-0.159px;font-size:16px;color:#18181b">Parcels</div>
<div class="t m" style="left:1407.6px;top:255.3px;letter-spacing:-0.117px;font-size:16px;color:#18181b">Zones</div>
<!--OVERVIEW-->
<div class="card" style="left:1512px;top:68.500px;width:639px;height:502.500px"></div>
<div class="t sb" style="left:1541.4px;top:107.5px;letter-spacing:0.602px;font-size:20px;color:#18181b">Site Overview</div>
<div class="t lbl" style="left:1541.4px;top:160.5px;letter-spacing:0.232px;">PARCEL IDS</div>
<div class="t val m" style="left:1541.4px;top:189px;letter-spacing:0.568px;">21101260230000, 21101260370000, 21101260390000,</div>
<div class="t val m" style="left:1541.4px;top:215.5px;letter-spacing:0.499px;">21101260410000</div>
<div class="t lbl" style="left:1541.4px;top:265px;letter-spacing:0.655px;">MUNICIPALITY</div>
<div class="t val m" style="left:1541.4px;top:292.5px;letter-spacing:0.389px;">Taylorsville</div>
<div class="t lbl" style="left:1541.4px;top:342.3px;letter-spacing:0.377px;">TOTAL SITE SIZE</div>
<div class="t val m" style="left:1541.4px;top:370.3px;letter-spacing:0.201px;">7.2 acres (311,975 sq ft)</div>
<div class="t lbl" style="left:1541.4px;top:419.3px;letter-spacing:0.353px;">ABUTTING PARCELS</div>
<div class="t val m" style="left:1541.4px;top:447.5px;letter-spacing:0.289px;">12 adjacent parcels</div>
<div class="t sm" style="left:1708.3px;top:449px;letter-spacing:0.406px;">(21101270360000, 21101260380000, 21101260070000,</div>
<div class="t sm" style="left:1541.4px;top:476.3px;letter-spacing:0.468px;">21101260400000, 21101260360000, 21101260300000, 21101260440000,</div>
<div class="t sm" style="left:1541.4px;top:503.5px;letter-spacing:0.395px;">21101270450000, 21101260120000, 21101260330000, 21101260340000,</div>
<div class="t sm" style="left:1541.4px;top:530.5px;letter-spacing:0.312px;">21101270270000)</div>
<!--ZONES-->
<div class="card" style="left:199.500px;top:589px;width:966px;height:361px"></div>
<div class="t sb" style="left:228.1px;top:635.2px;letter-spacing:0.705px;font-size:20px;color:#18181b">Current Zones</div>
<div class="abs" style="left:991.5px;top:617.500px;width:146px;height:35.500px;border-radius:9px;border:1.500px solid #e9e9eb;background:#fefefe;box-shadow:0 1px 2px rgba(0,0,0,.06)"></div>
<svg class="ico" style="left:1004.8px;top:626.4px" width="18" height="18" viewBox="0 0 24 24" fill="none" stroke="#27272a" stroke-width="2" stroke-linecap="round" stroke-linejoin="round"><path d="M15 2H6a2 2 0 0 0-2 2v16a2 2 0 0 0 2 2h12a2 2 0 0 0 2-2V7Z"/><path d="M14 2v4a2 2 0 0 0 2 2h4"/><path d="M10 9H8"/><path d="M16 13H8"/><path d="M16 17H8"/></svg>
<div class="t m" style="left:1032.2px;top:635.4px;letter-spacing:0.314px;font-size:16px;color:#18181b">View Details</div>
<div class="t th m" style="left:236.9px;top:710.5px;letter-spacing:0.311px;">Intended Use</div>
<div class="t th m" style="left:388.2px;top:710.5px;letter-spacing:0.340px;">Residential district R-1-10 (R-1-10)</div>
<div class="t th m" style="left:700.3px;top:710.5px;letter-spacing:0.389px;">Planned Center - Community Commercial District (CC)</div>
<div class="hr" style="left:227px;top:732.5px;width:911px"></div>
<div class="hr" style="left:227px;top:774.5px;width:911px"></div>
<div class="hr" style="left:227px;top:816.8px;width:911px"></div>
<div class="t td" style="left:236.9px;top:754.8px;letter-spacing:0.273px;-webkit-text-stroke:.15px currentColor">Office Building</div>
<svg class="ico" style="left:508.6px;top:745.8px" width="18" height="18" viewBox="0 0 24 24" fill="none" stroke="#b34a40" stroke-width="2.4" stroke-linecap="round" stroke-linejoin="round"><path d="M18 6 6 18"/><path d="m6 6 12 12"/></svg>
<svg class="ico" style="left:895.0px;top:745.8px" width="18" height="18" viewBox="0 0 24 24" fill="none" stroke="#58b47a" stroke-width="2" stroke-linecap="round" stroke-linejoin="round"><path d="M20 6 9 17l-5-5"/></svg>
<div class="t td" style="left:236.9px;top:796.6px;letter-spacing:-0.119px;-webkit-text-stroke:.15px currentColor">Car Wash</div>
<svg class="ico" style="left:508.6px;top:787.6px" width="18" height="18" viewBox="0 0 24 24" fill="none" stroke="#b34a40" stroke-width="2.4" stroke-linecap="round" stroke-linejoin="round"><path d="M18 6 6 18"/><path d="m6 6 12 12"/></svg>
<svg class="ico" style="left:895.0px;top:787.6px" width="18" height="18" viewBox="0 0 24 24" fill="none" stroke="#e6a765" stroke-width="2.2" stroke-linecap="round" stroke-linejoin="round"><path d="M5 12h14"/></svg>
<div class="t td" style="left:236.9px;top:838.8px;letter-spacing:0.020px;-webkit-text-stroke:.15px currentColor">Gas Station</div>
<svg class="ico" style="left:508.6px;top:829.8px" width="18" height="18" viewBox="0 0 24 24" fill="none" stroke="#b34a40" stroke-width="2.4" stroke-linecap="round" stroke-linejoin="round"><path d="M18 6 6 18"/><path d="m6 6 12 12"/></svg>
<svg class="ico" style="left:895.0px;top:829.8px" width="18" height="18" viewBox="0 0 24 24" fill="none" stroke="#e6a765" stroke-width="2.2" stroke-linecap="round" stroke-linejoin="round"><path d="M5 12h14"/></svg>
<div class="t lbl" style="left:228px;top:885.5px;letter-spacing:-0.880px;color:#3f3f46">KEY</div>
<svg class="ico" style="left:228.0px;top:904.2px" width="18" height="18" viewBox="0 0 24 24" fill="none" stroke="#58b47a" stroke-width="2" stroke-linecap="round" stroke-linejoin="round"><path d="M20 6 9 17l-5-5"/></svg>
<div class="t key" style="left:254.9px;top:913.2px;letter-spacing:0.069px;-webkit-text-stroke:.2px currentColor">Permitted by right</div>
<svg class="ico" style="left:388.4px;top:904.2px" width="18" height="18" viewBox="0 0 24 24" fill="none" stroke="#b34a40" stroke-width="2" stroke-linecap="round" stroke-linejoin="round"><path d="M18 6 6 18"/><path d="m6 6 12 12"/></svg>
<div class="t key" style="left:415.9px;top:913.2px;letter-spacing:0.139px;-webkit-text-stroke:.2px currentColor">Not permitted</div>
<svg class="ico" style="left:523.7px;top:904.2px" width="18" height="18" viewBox="0 0 24 24" fill="none" stroke="#e6a765" stroke-width="2" stroke-linecap="round" stroke-linejoin="round"><path d="M5 12h14"/></svg>
<div class="t key" style="left:550.6px;top:913.2px;letter-spacing:0.100px;-webkit-text-stroke:.2px currentColor">Conditionally permitted</div>
<svg class="ico" style="left:719.2px;top:904.2px" width="18" height="18" viewBox="0 0 24 24" fill="none" stroke="#d9892b" stroke-width="2" stroke-linecap="round" stroke-linejoin="round"><path d="M20 13c0 5-3.500 7.500-7.660 8.950a1 1 0 0 1-.670-.010C7.500 20.500 4 18 4 13V6a1 1 0 0 1 1-1c2 0 4.500-1.200 6.240-2.720a1.170 1.170 0 0 1 1.520 0C14.510 3.810 17 5 19 5a1 1 0 0 1 1 1z"/><path d="M9.100 9a3 3 0 0 1 5.820 1c0 2-3 3-3 3"/><path d="M12 17h.01"/></svg>
<div class="t key" style="left:746.1px;top:913.2px;letter-spacing:0.004px;-webkit-text-stroke:.2px currentColor">Special permit required</div>
<svg class="ico" style="left:914.0px;top:904.2px" width="18" height="18" viewBox="0 0 24 24" fill="none" stroke="#52525b" stroke-width="2" stroke-linecap="round" stroke-linejoin="round"><circle cx="12" cy="12" r="10"/><path d="M9.090 9a3 3 0 0 1 5.830 1c0 2-3 3-3 3"/><path d="M12 17h.01"/></svg>
<div class="t key" style="left:941.1px;top:913.2px;letter-spacing:0.053px;-webkit-text-stroke:.2px currentColor">Not found</div>
<!--REZONE-->
<div class="card" style="left:1184px;top:589px;width:966.500px;height:361px"></div>
<div class="t sb" style="left:1213.1px;top:635.2px;letter-spacing:0.483px;font-size:20px;color:#18181b">Rezone Options</div>
<div class="abs" style="left:1977px;top:617.500px;width:146px;height:35.500px;border-radius:9px;border:1.500px solid #e9e9eb;background:#fefefe;box-shadow:0 1px 2px rgba(0,0,0,.06)"></div>
<svg class="ico" style="left:1990.3px;top:626.4px" width="18" height="18" viewBox="0 0 24 24" fill="none" stroke="#27272a" stroke-width="2" stroke-linecap="round" stroke-linejoin="round"><path d="M15 2H6a2 2 0 0 0-2 2v16a2 2 0 0 0 2 2h12a2 2 0 0 0 2-2V7Z"/><path d="M14 2v4a2 2 0 0 0 2 2h4"/><path d="M10 9H8"/><path d="M16 13H8"/><path d="M16 17H8"/></svg>
<div class="t m" style="left:2017.7px;top:635.4px;letter-spacing:0.314px;font-size:16px;color:#18181b">View Details</div>
<div class="abs" style="left:1212px;top:690px;width:910.500px;height:170px;overflow:hidden">
<div class="t th m" style="left:9.599999999999909px;top:20.5px;letter-spacing:0.365px;">Intended Use</div>
<div class="t th m" style="left:135.70000000000005px;top:20.5px;letter-spacing:0.463px;">Industrial District (ID)</div>
<div class="t th m" style="left:314.5999999999999px;top:20.5px;letter-spacing:0.310px;">Regional Commercial District (RC)</div>
<div class="t th m" style="left:588.4000000000001px;top:20.5px;letter-spacing:0.361px;">Boulevard Commercial District (BC)</div>
<div class="t th m" style="left:872.1999999999998px;top:20.5px;letter-spacing:0.637px;">Limited Commercial District (LC)</div>
</div>
<div class="hr" style="left:1211.500px;top:732.5px;width:912px"></div>
<div class="hr" style="left:1211.500px;top:774.5px;width:912px"></div>
<div class="hr" style="left:1211.500px;top:816.8px;width:912px"></div>
<div class="t td" style="left:1221.6000000000001px;top:754.8px;letter-spacing:0.273px;-webkit-text-stroke:.15px currentColor">Office Building</div>
<svg class="ico" style="left:1419.4px;top:745.8px" width="18" height="18" viewBox="0 0 24 24" fill="none" stroke="#58b47a" stroke-width="2" stroke-linecap="round" stroke-linejoin="round"><path d="M20 6 9 17l-5-5"/></svg>
<svg class="ico" style="left:1645.0px;top:745.8px" width="18" height="18" viewBox="0 0 24 24" fill="none" stroke="#58b47a" stroke-width="2" stroke-linecap="round" stroke-linejoin="round"><path d="M20 6 9 17l-5-5"/></svg>
<svg class="ico" style="left:1924.6px;top:745.8px" width="18" height="18" viewBox="0 0 24 24" fill="none" stroke="#58b47a" stroke-width="2" stroke-linecap="round" stroke-linejoin="round"><path d="M20 6 9 17l-5-5"/></svg>
<div class="t td" style="left:1221.6000000000001px;top:796.6px;letter-spacing:-0.119px;-webkit-text-stroke:.15px currentColor">Car Wash</div>
<svg class="ico" style="left:1419.4px;top:787.6px" width="18" height="18" viewBox="0 0 24 24" fill="none" stroke="#58b47a" stroke-width="2" stroke-linecap="round" stroke-linejoin="round"><path d="M20 6 9 17l-5-5"/></svg>
<svg class="ico" style="left:1645.0px;top:787.6px" width="18" height="18" viewBox="0 0 24 24" fill="none" stroke="#e6a765" stroke-width="2.2" stroke-linecap="round" stroke-linejoin="round"><path d="M5 12h14"/></svg>
<svg class="ico" style="left:1924.6px;top:787.6px" width="18" height="18" viewBox="0 0 24 24" fill="none" stroke="#e6a765" stroke-width="2.2" stroke-linecap="round" stroke-linejoin="round"><path d="M5 12h14"/></svg>
<div class="t td" style="left:1221.6000000000001px;top:838.8px;letter-spacing:0.020px;-webkit-text-stroke:.15px currentColor">Gas Station</div>
<svg class="ico" style="left:1419.4px;top:829.8px" width="18" height="18" viewBox="0 0 24 24" fill="none" stroke="#58b47a" stroke-width="2" stroke-linecap="round" stroke-linejoin="round"><path d="M20 6 9 17l-5-5"/></svg>
<svg class="ico" style="left:1645.0px;top:829.8px" width="18" height="18" viewBox="0 0 24 24" fill="none" stroke="#e6a765" stroke-width="2.2" stroke-linecap="round" stroke-linejoin="round"><path d="M5 12h14"/></svg>
<svg class="ico" style="left:1924.6px;top:829.8px" width="18" height="18" viewBox="0 0 24 24" fill="none" stroke="#e6a765" stroke-width="2.2" stroke-linecap="round" stroke-linejoin="round"><path d="M5 12h14"/></svg>
<div class="t lbl" style="left:1213px;top:885.5px;letter-spacing:-0.880px;color:#3f3f46">KEY</div>
<svg class="ico" style="left:1213.0px;top:904.2px" width="18" height="18" viewBox="0 0 24 24" fill="none" stroke="#58b47a" stroke-width="2" stroke-linecap="round" stroke-linejoin="round"><path d="M20 6 9 17l-5-5"/></svg>
<div class="t key" style="left:1239.9px;top:913.2px;letter-spacing:0.069px;-webkit-text-stroke:.2px currentColor">Permitted by right</div>
<svg class="ico" style="left:1373.4px;top:904.2px" width="18" height="18" viewBox="0 0 24 24" fill="none" stroke="#b34a40" stroke-width="2" stroke-linecap="round" stroke-linejoin="round"><path d="M18 6 6 18"/><path d="m6 6 12 12"/></svg>
<div class="t key" style="left:1400.9px;top:913.2px;letter-spacing:0.139px;-webkit-text-stroke:.2px currentColor">Not permitted</div>
<svg class="ico" style="left:1508.7px;top:904.2px" width="18" height="18" viewBox="0 0 24 24" fill="none" stroke="#e6a765" stroke-width="2" stroke-linecap="round" stroke-linejoin="round"><path d="M5 12h14"/></svg>
<div class="t key" style="left:1535.6px;top:913.2px;letter-spacing:0.100px;-webkit-text-stroke:.2px currentColor">Conditionally permitted</div>
<svg class="ico" style="left:1704.2px;top:904.2px" width="18" height="18" viewBox="0 0 24 24" fill="none" stroke="#d9892b" stroke-width="2" stroke-linecap="round" stroke-linejoin="round"><path d="M20 13c0 5-3.500 7.500-7.660 8.950a1 1 0 0 1-.670-.010C7.500 20.500 4 18 4 13V6a1 1 0 0 1 1-1c2 0 4.500-1.200 6.240-2.720a1.170 1.170 0 0 1 1.520 0C14.510 3.810 17 5 19 5a1 1 0 0 1 1 1z"/><path d="M9.100 9a3 3 0 0 1 5.820 1c0 2-3 3-3 3"/><path d="M12 17h.01"/></svg>
<div class="t key" style="left:1731.1px;top:913.2px;letter-spacing:0.004px;-webkit-text-stroke:.2px currentColor">Special permit required</div>
<svg class="ico" style="left:1899.0px;top:904.2px" width="18" height="18" viewBox="0 0 24 24" fill="none" stroke="#52525b" stroke-width="2" stroke-linecap="round" stroke-linejoin="round"><circle cx="12" cy="12" r="10"/><path d="M9.090 9a3 3 0 0 1 5.830 1c0 2-3 3-3 3"/><path d="M12 17h.01"/></svg>
<div class="t key" style="left:1926.1px;top:913.2px;letter-spacing:0.053px;-webkit-text-stroke:.2px currentColor">Not found</div>
<!--REPORTS-->
<div class="card" style="left:199.500px;top:969.500px;width:1951px;height:140px"></div>
<svg class="ico" style="left:227.7px;top:1000.5px" width="17" height="17" viewBox="0 0 24 24" fill="none" stroke="#27272a" stroke-width="2.2" stroke-linecap="round" stroke-linejoin="round"><path d="m6 9 6 6 6-6"/></svg>
<div class="t m" style="left:255px;top:1008.6px;letter-spacing:0.293px;font-size:16px;color:#27272a">Generated Reports:</div>
<div class="abs" style="left:409px;top:999px;width:19.500px;height:19.500px;border-radius:6px;background:#f6f6f7"></div>
<div class="t m" style="left:414.7px;top:1008.8px;font-size:14px;color:#27272a">2</div>
<div class="abs" style="left:227px;top:1034px;width:138.500px;height:38px;border-radius:9px;background:#202023"></div>
<div class="t m" style="left:242.3px;top:1053.2px;letter-spacing:-0.003px;font-size:16px;color:#fafafa">CC • Car Wash</div>
<div class="abs" style="left:375px;top:1034px;width:144px;height:38px;border-radius:9px;background:#fefefe;border:1.500px solid #ececee"></div>
<div class="t " style="left:389.6px;top:1053.2px;letter-spacing:0.107px;font-size:16px;color:#27272a">ID • Gas Station</div>
<div class="abs" style="left:180px;top:1073.500px;width:1984px;height:7px;background:#f5f5f5;border-top:1.500px solid #e6e6e6"></div>
<!--SCROLL-->
<div class="abs" style="left:2150.500px;top:51.500px;width:14px;height:1022px;background:#fafafa;border-left:1.500px solid #e9e9e9"></div>
<div class="abs" style="left:2155px;top:53px;width:12px;height:469px;border-radius:5px;background:#7d7d7d"></div>
</div>
</body>
</html>
